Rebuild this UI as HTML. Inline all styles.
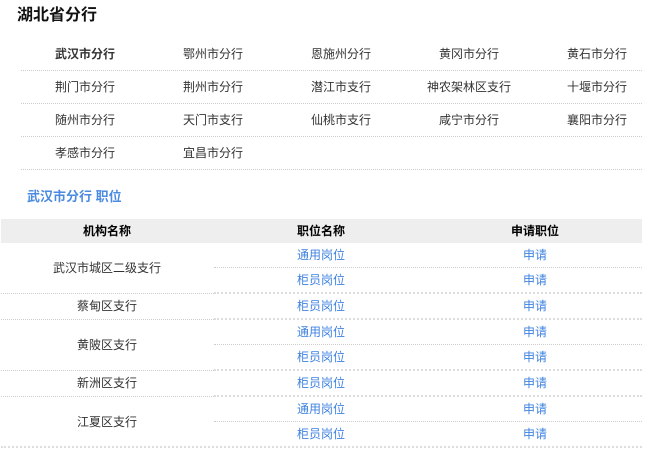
<!DOCTYPE html>
<html lang="zh">
<head>
<meta charset="utf-8">
<style>
html,body{margin:0;padding:0;background:#fff;}
body{width:662px;height:465px;overflow:hidden;position:relative;font-family:"Liberation Sans","Noto Sans CJK SC",sans-serif;font-size:12px;color:#333;}
.t{position:absolute;white-space:nowrap;text-align:center;height:20px;line-height:20px;width:128px;}
.b{font-weight:bold;}
.l{position:absolute;height:0;border-top:1px dotted #ccc;}
.d{border-top:2px dotted #ddd;}
.c1{width:212px;left:1px;}
.c2{width:214px;left:214px;}
.c3{width:214px;left:428px;}
.h{color:#000;font-weight:bold;}
.a{color:#3f83e0;}
</style>
</head>
<body>
<div style="position:absolute;left:17px;top:5px;font-size:16px;font-weight:bold;line-height:22px;color:#111;">湖北省分行</div>

<div class="t b" style="left:21px;top:44px">武汉市分行</div>
<div class="t" style="left:149px;top:44px">鄂州市分行</div>
<div class="t" style="left:277px;top:44px">恩施州分行</div>
<div class="t" style="left:405px;top:44px">黄冈市分行</div>
<div class="t" style="left:533px;top:44px">黄石市分行</div>
<div class="l" style="left:21px;width:621px;top:70px"></div>

<div class="t" style="left:21px;top:77px">荆门市分行</div>
<div class="t" style="left:149px;top:77px">荆州市分行</div>
<div class="t" style="left:277px;top:77px">潜江市支行</div>
<div class="t" style="left:405px;top:77px">神农架林区支行</div>
<div class="t" style="left:533px;top:77px">十堰市分行</div>
<div class="l" style="left:21px;width:621px;top:103px"></div>

<div class="t" style="left:21px;top:110px">随州市分行</div>
<div class="t" style="left:149px;top:110px">天门市支行</div>
<div class="t" style="left:277px;top:110px">仙桃市支行</div>
<div class="t" style="left:405px;top:110px">咸宁市分行</div>
<div class="t" style="left:533px;top:110px">襄阳市分行</div>
<div class="l" style="left:21px;width:621px;top:136px"></div>

<div class="t" style="left:21px;top:143px">孝感市分行</div>
<div class="t" style="left:149px;top:143px">宜昌市分行</div>
<div class="l" style="left:21px;width:621px;top:169px"></div>

<div style="position:absolute;left:27px;top:187px;font-size:13px;font-weight:bold;line-height:20px;color:#4a8ae0;">武汉市分行 职位</div>

<div style="position:absolute;left:1px;top:219px;width:641px;height:24px;background:#eee;"></div>
<div class="t h c1" style="top:221px">机构名称</div>
<div class="t h c2" style="top:221px">职位名称</div>
<div class="t h c3" style="top:221px">申请职位</div>

<div class="t c1" style="top:258px">武汉市城区二级支行</div>
<div class="t c1" style="top:296px">蔡甸区支行</div>
<div class="t c1" style="top:335px">黄陂区支行</div>
<div class="t c1" style="top:373px">新洲区支行</div>
<div class="t c1" style="top:412px">江夏区支行</div>

<div class="t a c2" style="top:245px">通用岗位</div><div class="t a c3" style="top:245px">申请</div>
<div class="t a c2" style="top:270px">柜员岗位</div><div class="t a c3" style="top:270px">申请</div>
<div class="t a c2" style="top:296px">柜员岗位</div><div class="t a c3" style="top:296px">申请</div>
<div class="t a c2" style="top:322px">通用岗位</div><div class="t a c3" style="top:322px">申请</div>
<div class="t a c2" style="top:347px">柜员岗位</div><div class="t a c3" style="top:347px">申请</div>
<div class="t a c2" style="top:373px">柜员岗位</div><div class="t a c3" style="top:373px">申请</div>
<div class="t a c2" style="top:399px">通用岗位</div><div class="t a c3" style="top:399px">申请</div>
<div class="t a c2" style="top:424px">柜员岗位</div><div class="t a c3" style="top:424px">申请</div>

<div class="l" style="left:214px;width:428px;top:267px"></div>
<div class="l" style="left:1px;width:213px;top:293px"></div><div class="l d" style="left:214px;width:428px;top:292px"></div>
<div class="l" style="left:1px;width:213px;top:319px"></div><div class="l d" style="left:214px;width:428px;top:318px"></div>
<div class="l" style="left:214px;width:428px;top:344px"></div>
<div class="l" style="left:1px;width:213px;top:370px"></div><div class="l d" style="left:214px;width:428px;top:369px"></div>
<div class="l" style="left:1px;width:213px;top:396px"></div><div class="l d" style="left:214px;width:428px;top:395px"></div>
<div class="l" style="left:214px;width:428px;top:421px"></div>
<div class="l d" style="left:1px;width:641px;top:446px"></div>
</body>
</html>
